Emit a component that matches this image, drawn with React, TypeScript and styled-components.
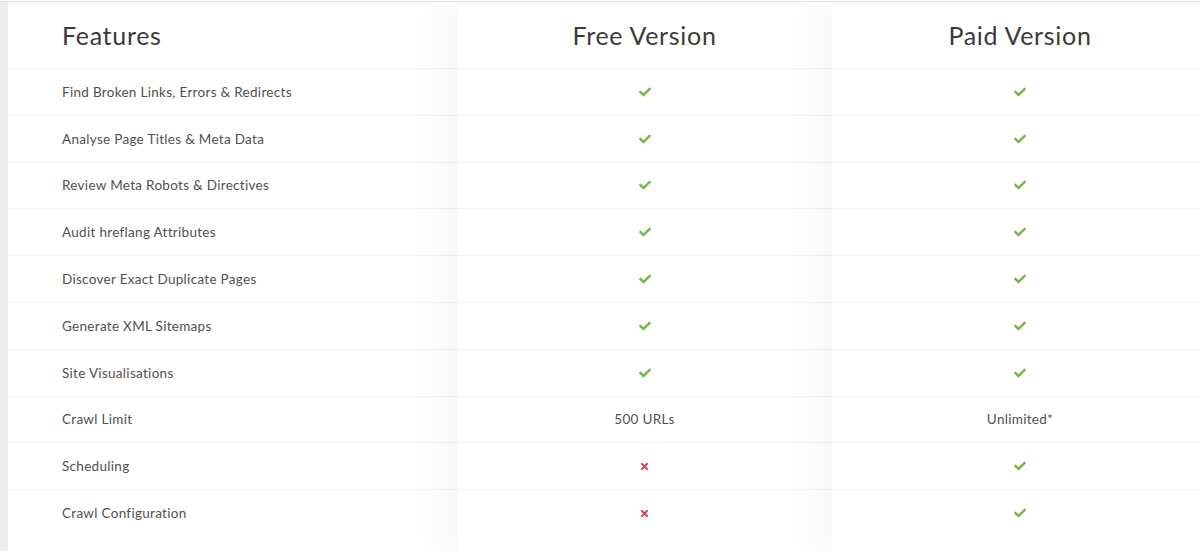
import React from 'react'
import styled, { createGlobalStyle } from 'styled-components'
import { FaCheck, FaTimes } from 'react-icons/fa'

const GlobalStyle = createGlobalStyle`
  html, body {
    margin: 0;
    padding: 0;
    background: #ffffff;
    overflow: hidden;
  }
  body {
    font-family: Lato, "Open Sans", Arial, sans-serif;
  }
`

type Cell = 'yes' | 'no' | string

const rows: { name: string; free: Cell; paid: Cell }[] = [
  { name: 'Find Broken Links, Errors & Redirects', free: 'yes', paid: 'yes' },
  { name: 'Analyse Page Titles & Meta Data', free: 'yes', paid: 'yes' },
  { name: 'Review Meta Robots & Directives', free: 'yes', paid: 'yes' },
  { name: 'Audit hreflang Attributes', free: 'yes', paid: 'yes' },
  { name: 'Discover Exact Duplicate Pages', free: 'yes', paid: 'yes' },
  { name: 'Generate XML Sitemaps', free: 'yes', paid: 'yes' },
  { name: 'Site Visualisations', free: 'yes', paid: 'yes' },
  { name: 'Crawl Limit', free: '500 URLs', paid: 'Unlimited*' },
  { name: 'Scheduling', free: 'no', paid: 'yes' },
  { name: 'Crawl Configuration', free: 'no', paid: 'yes' },
]

// tick / cross / plain text for the version columns
function renderCell(value: Cell) {
  if (value === 'yes') return <FaCheck color="#78b548" size={12} />
  if (value === 'no') return <FaTimes color="#d34848" size={11} />
  return <span>{value}</span>
}

export default function App(): JSX.Element {
  return (
    <Page>
      <GlobalStyle />
      <Edge />
      <Table>
        <Column>
          <HeaderCell>Features</HeaderCell>
          {rows.map((r) => (
            <Row key={r.name}>{r.name}</Row>
          ))}
        </Column>
        <Column $raised $centered>
          <HeaderCell>Free Version</HeaderCell>
          {rows.map((r) => (
            <Row key={r.name}>{renderCell(r.free)}</Row>
          ))}
        </Column>
        <Column $raised $centered>
          <HeaderCell>Paid Version</HeaderCell>
          {rows.map((r) => (
            <Row key={r.name}>{renderCell(r.paid)}</Row>
          ))}
        </Column>
      </Table>
    </Page>
  )
}

const Page = styled.div`
  display: flex;
  width: 1216px;
  height: 551px;
  margin-top: 1px;
  border-top: 1px solid #dcdcdc;
  box-sizing: border-box;
  overflow: hidden;
`

const Edge = styled.div`
  width: 8px;
  flex: none;
  background: #ececec;
`

const Table = styled.div`
  display: grid;
  grid-template-columns: 449px 375px 376px;
  align-items: start;
  height: 100%;
`

const Column = styled.div<{ $raised?: boolean; $centered?: boolean }>`
  position: relative;
  background: #ffffff;
  height: 100%;
  box-shadow: ${(p) => (p.$raised ? '-18px 0 30px rgba(0, 0, 0, 0.035)' : 'none')};
  text-align: ${(p) => (p.$centered ? 'center' : 'left')};
  & > div {
    padding-left: ${(p) => (p.$centered ? '0' : '54px')};
    justify-content: ${(p) => (p.$centered ? 'center' : 'flex-start')};
  }
`

const HeaderCell = styled.div`
  display: flex;
  align-items: center;
  height: 66px;
  font-size: 25px;
  color: #3a3a3a;
  letter-spacing: 0.7px;
`

const Row = styled.div`
  display: flex;
  align-items: center;
  height: 46.8px;
  box-sizing: border-box;
  border-top: 1px solid #f2f2f2;
  font-size: 13.5px;
  color: #505050;
  letter-spacing: 0.3px;
`
